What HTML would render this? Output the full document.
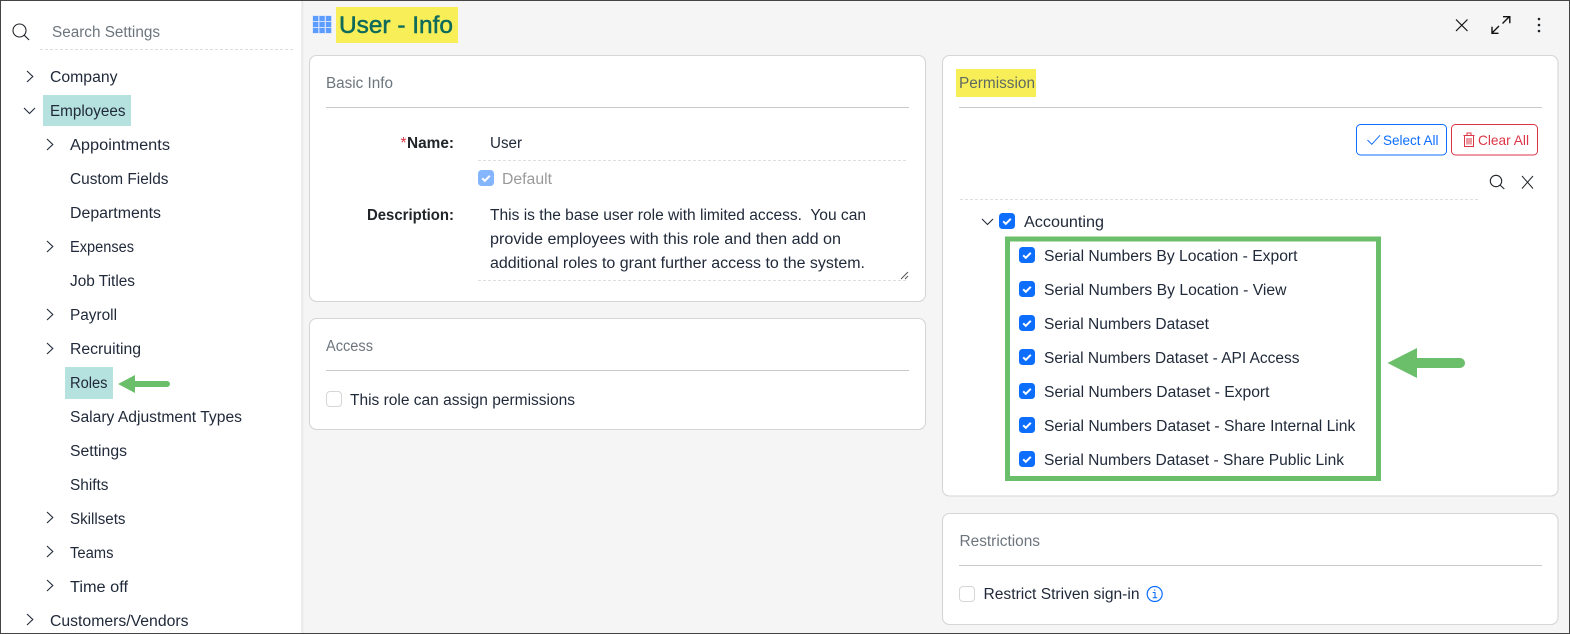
<!DOCTYPE html>
<html><head><meta charset="utf-8"><style>
html,body{margin:0;padding:0;background:#f5f5f5;width:1570px;height:634px;overflow:hidden}
svg{display:block;position:absolute;left:0;top:0}
text{font-family:"Liberation Sans",sans-serif;font-size:15.5px;fill:#212a3a}
.g{fill:#6c757d}.b{font-weight:bold;fill:#212529}
.card{fill:#fff;stroke:#d6d6d6;stroke-width:1.1}
.dv{stroke:#c9c9c9;stroke-width:1}
.ds{stroke:#dedede;stroke-width:1;stroke-dasharray:3 2}
.ic{fill:none;stroke:#212529;stroke-width:1.1}
</style></head><body>
<svg width="1570" height="634" viewBox="0 0 1570 634" xmlns="http://www.w3.org/2000/svg">
<defs>
<g id="cb"><rect width="16" height="16" rx="3.5" fill="#0d6efd"/><path d="M4.2 8.3l2.6 2.5 5-5" fill="none" stroke="#fff" stroke-width="2"/></g>
<g id="cr"><path d="M0 0l5.8 5.500L0 11" fill="none" stroke="#212a3a" stroke-width="1.1"/></g>
<g id="cd"><path d="M0 0l5.500 5.500L11 0" fill="none" stroke="#212a3a" stroke-width="1.1"/></g>
</defs>
<rect width="1570" height="634" fill="#f5f5f5"/>
<rect x="0" y="0" width="301" height="634" fill="#fff"/>
<rect x="301" y="0" width="2.5" height="634" fill="#ececec"/>

<!-- sidebar -->
<circle cx="19.500" cy="30.500" r="6.500" class="ic"/><path d="M24.300 35.300l4.800 4.700" class="ic"/>
<text x="52" y="37" class="g" lengthAdjust="spacingAndGlyphs" textLength="108">Search Settings</text>
<path d="M40 49.500H295" class="ds"/>
<rect x="43" y="95" width="88" height="31" fill="#b5e1df"/>
<rect x="65" y="367" width="48" height="32" fill="#b5e1df"/>
<use href="#cr" x="27" y="71"/><use href="#cd" x="24" y="108"/><use href="#cr" x="47" y="139"/><use href="#cr" x="47" y="241"/><use href="#cr" x="47" y="309"/><use href="#cr" x="47" y="343"/><use href="#cr" x="47" y="512"/><use href="#cr" x="47" y="546"/><use href="#cr" x="47" y="580"/><use href="#cr" x="27" y="614"/>
<text x="50" y="82" lengthAdjust="spacingAndGlyphs" textLength="67.500">Company</text>
<text x="50" y="116" lengthAdjust="spacingAndGlyphs" textLength="75.500">Employees</text>
<text x="70" y="150" lengthAdjust="spacingAndGlyphs" textLength="100">Appointments</text>
<text x="70" y="184" lengthAdjust="spacingAndGlyphs" textLength="98.500">Custom Fields</text>
<text x="70" y="218" lengthAdjust="spacingAndGlyphs" textLength="91">Departments</text>
<text x="70" y="252" lengthAdjust="spacingAndGlyphs" textLength="64">Expenses</text>
<text x="70" y="286" lengthAdjust="spacingAndGlyphs" textLength="65">Job Titles</text>
<text x="70" y="320" lengthAdjust="spacingAndGlyphs" textLength="47">Payroll</text>
<text x="70" y="354" lengthAdjust="spacingAndGlyphs" textLength="71">Recruiting</text>
<text x="70" y="388" lengthAdjust="spacingAndGlyphs" textLength="37.500">Roles</text>
<text x="70" y="422" lengthAdjust="spacingAndGlyphs" textLength="172">Salary Adjustment Types</text>
<text x="70" y="456" lengthAdjust="spacingAndGlyphs" textLength="57">Settings</text>
<text x="70" y="490" lengthAdjust="spacingAndGlyphs" textLength="38.500">Shifts</text>
<text x="70" y="524" lengthAdjust="spacingAndGlyphs" textLength="55.500">Skillsets</text>
<text x="70" y="558" lengthAdjust="spacingAndGlyphs" textLength="43.500">Teams</text>
<text x="70" y="592" lengthAdjust="spacingAndGlyphs" textLength="58">Time off</text>
<text x="50" y="626" lengthAdjust="spacingAndGlyphs" textLength="138.500">Customers/Vendors</text>
<path d="M118 384l17-9v6h32a3 3 0 0 1 0 6h-32v6z" fill="#6cbf6a"/>

<!-- header -->
<rect x="336" y="7" width="122" height="36" fill="#f8ee58"/>
<rect x="312.500" y="15.500" width="19" height="18" fill="#cfe0ff"/>
<g fill="#5c9cff"><rect x="313" y="16" width="5.200" height="5"/><rect x="319.500" y="16" width="5.200" height="5"/><rect x="326" y="16" width="5.200" height="5"/><rect x="313" y="22" width="5.200" height="5"/><rect x="319.500" y="22" width="5.200" height="5"/><rect x="326" y="22" width="5.200" height="5"/><rect x="313" y="28" width="5.200" height="5"/><rect x="319.500" y="28" width="5.200" height="5"/><rect x="326" y="28" width="5.200" height="5"/></g>
<text x="339" y="33" style="font-size:24px;fill:#0e6a5a;stroke:#0e6a5a;stroke-width:.5" lengthAdjust="spacingAndGlyphs" textLength="114">User - Info</text>
<path d="M1456 19.500l11.500 11.500M1467.500 19.500L1456 31" class="ic" style="stroke-width:1.2;stroke:#111"/>
<path d="M1492 33l7-7M1502.500 23.500l7-7M1503 16.700h6.800v6.500M1492 26.700V33.300h6.500" class="ic" style="stroke-width:1.4;stroke:#111"/>
<g fill="#212529"><circle cx="1539" cy="19" r="1.300"/><circle cx="1539" cy="25" r="1.300"/><circle cx="1539" cy="31" r="1.300"/></g>

<!-- cards -->
<rect x="309.500" y="55.500" width="616" height="246" rx="7" class="card"/>
<rect x="309.500" y="318.500" width="616" height="111" rx="7" class="card"/>
<rect x="942.500" y="55.500" width="615.500" height="440.500" rx="7" class="card"/>
<rect x="942.500" y="513.500" width="615.500" height="111" rx="7" class="card"/>
<path d="M326 107.500H909M959 107.500H1542M326 370.500H909M959 565.500H1542" class="dv"/>

<!-- basic -->
<text x="326" y="88" class="g" lengthAdjust="spacingAndGlyphs" textLength="67">Basic Info</text>
<text x="400.500" y="148" style="fill:#dc3545" textLength="6">*</text>
<text x="407" y="148" class="b" lengthAdjust="spacingAndGlyphs" textLength="47">Name:</text>
<text x="490" y="148" lengthAdjust="spacingAndGlyphs" textLength="32">User</text>
<path d="M478 160.500H908M478 280.500H908" class="ds"/>
<g opacity=".5"><use href="#cb" x="478" y="170"/></g>
<text x="502" y="184" style="fill:#9a9a9a" lengthAdjust="spacingAndGlyphs" textLength="50">Default</text>
<text x="367" y="220" class="b" lengthAdjust="spacingAndGlyphs" textLength="87">Description:</text>
<text x="490" y="220" lengthAdjust="spacingAndGlyphs" textLength="376" xml:space="preserve">This is the base user role with limited access.  You can</text>
<text x="490" y="244" lengthAdjust="spacingAndGlyphs" textLength="351">provide employees with this role and then add on</text>
<text x="490" y="268" lengthAdjust="spacingAndGlyphs" textLength="375">additional roles to grant further access to the system.</text>
<path d="M901 279l7-7M905 279l3-3" stroke="#555" stroke-width="1" fill="none"/>

<!-- access -->
<text x="326" y="351" class="g" lengthAdjust="spacingAndGlyphs" textLength="47">Access</text>
<rect x="326.500" y="391.500" width="15" height="15" rx="3.500" fill="#fff" stroke="#d6d6d6"/>
<text x="350" y="405" lengthAdjust="spacingAndGlyphs" textLength="225">This role can assign permissions</text>

<!-- permission -->
<rect x="956" y="69" width="80" height="28" fill="#f8ee58"/>
<text x="959" y="88" class="g" style="fill:#5f6a60" lengthAdjust="spacingAndGlyphs" textLength="76">Permission</text>
<rect x="1356.500" y="124.500" width="90" height="30.500" rx="4" fill="#fff" stroke="#0d6efd"/>
<rect x="1451.500" y="124.500" width="86" height="30.500" rx="4" fill="#fff" stroke="#dc3545"/>
<path d="M1367.500 140l4.300 4.300 8.200-9" fill="none" stroke="#0d6efd" stroke-width="1"/>
<text x="1383" y="145" style="font-size:14px;fill:#0d6efd" lengthAdjust="spacingAndGlyphs" textLength="55.500">Select All</text>
<path d="M1463.500 135.500h11M1467 135v-2h4v2M1464.500 136v10.500h9V136M1467 138v6.500M1469 138v6.500M1471 138v6.500" fill="none" stroke="#dc3545" stroke-width="1"/>
<text x="1478" y="145" style="font-size:14px;fill:#dc3545" lengthAdjust="spacingAndGlyphs" textLength="51">Clear All</text>
<circle cx="1496" cy="181" r="5.700" class="ic"/><path d="M1500 185l4.300 4" class="ic"/>
<path d="M1522 176l11 12.500M1533 176l-11 12.500" class="ic" style="stroke-width:1"/>
<path d="M960 199.500H1479" class="ds"/>
<use href="#cd" x="982" y="219"/>
<use href="#cb" x="999" y="213"/>
<text x="1024" y="227" lengthAdjust="spacingAndGlyphs" textLength="80">Accounting</text>
<rect x="1007.500" y="239" width="371" height="239.500" fill="none" stroke="#6cbf6a" stroke-width="5"/>
<use href="#cb" x="1019" y="247"/><use href="#cb" x="1019" y="281"/><use href="#cb" x="1019" y="315"/><use href="#cb" x="1019" y="349"/><use href="#cb" x="1019" y="383"/><use href="#cb" x="1019" y="417"/><use href="#cb" x="1019" y="451"/>
<text x="1044" y="261" lengthAdjust="spacingAndGlyphs" textLength="253.500">Serial Numbers By Location - Export</text>
<text x="1044" y="295" lengthAdjust="spacingAndGlyphs" textLength="242.500">Serial Numbers By Location - View</text>
<text x="1044" y="329" lengthAdjust="spacingAndGlyphs" textLength="165">Serial Numbers Dataset</text>
<text x="1044" y="363" lengthAdjust="spacingAndGlyphs" textLength="255.500">Serial Numbers Dataset - API Access</text>
<text x="1044" y="397" lengthAdjust="spacingAndGlyphs" textLength="225.500">Serial Numbers Dataset - Export</text>
<text x="1044" y="431" lengthAdjust="spacingAndGlyphs" textLength="311.300">Serial Numbers Dataset - Share Internal Link</text>
<text x="1044" y="465" lengthAdjust="spacingAndGlyphs" textLength="300">Serial Numbers Dataset - Share Public Link</text>
<path d="M1387.500 363l29.500-15v10h43a5 5 0 0 1 0 10h-43v10z" fill="#6cbf6a"/>

<!-- restrictions -->
<text x="959.500" y="546" class="g" lengthAdjust="spacingAndGlyphs" textLength="80.500">Restrictions</text>
<rect x="959.500" y="586.500" width="15" height="15" rx="3.500" fill="#fff" stroke="#d6d6d6"/>
<text x="983.500" y="599" lengthAdjust="spacingAndGlyphs" textLength="156">Restrict Striven sign-in</text>
<circle cx="1154.700" cy="594" r="7.500" fill="none" stroke="#0d6efd" stroke-width="1.200"/>
<path d="M1152.700 592.500h2.300v5M1152.700 597.700h4.500M1154.700 589.500v1.300" fill="none" stroke="#0d6efd" stroke-width="1.100"/>

<!-- frame -->
<rect x=".5" y=".5" width="1569" height="633" fill="none" stroke="#444" stroke-width="1"/>
</svg>
</body></html>
